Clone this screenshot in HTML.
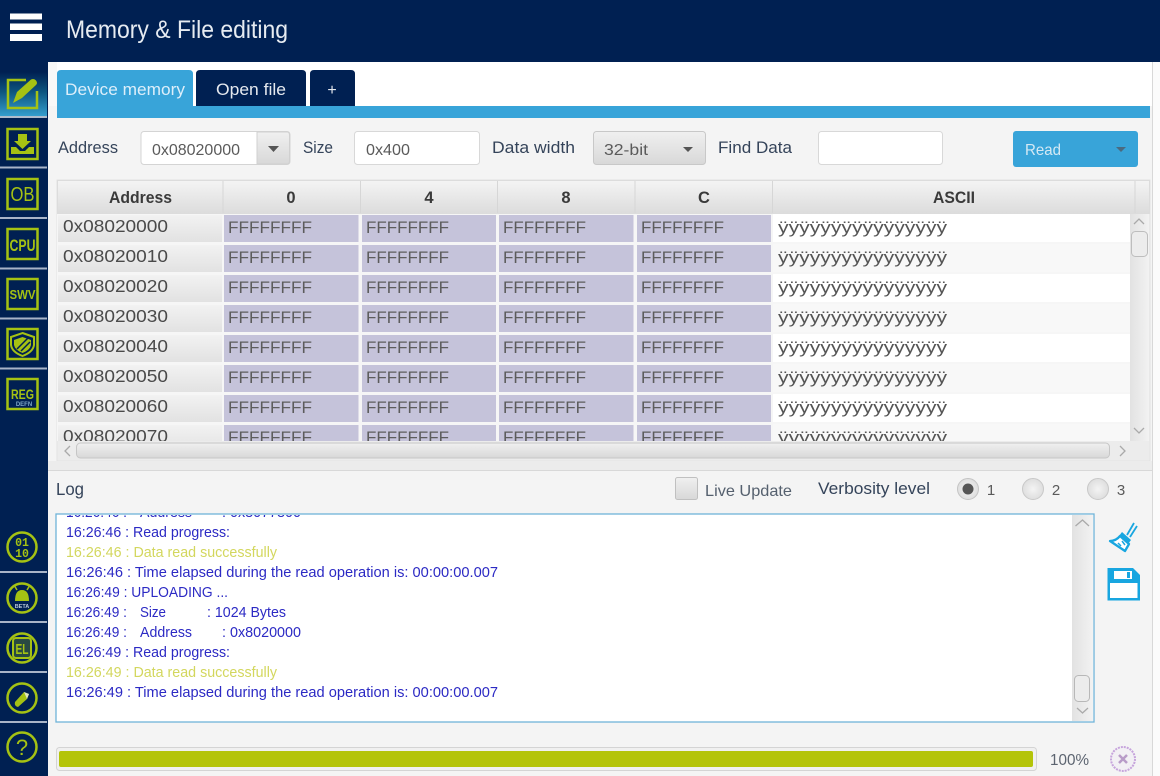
<!DOCTYPE html>
<html><head><meta charset="utf-8"><title>Memory &amp; File editing</title>
<style>
html,body{margin:0;padding:0;background:#f4f4f4;width:1160px;height:776px;overflow:hidden}
svg{display:block;filter:blur(.35px)}
text{font-family:"Liberation Sans",sans-serif;white-space:pre}
.t15{font-size:16.500px;fill:#35445a}
.v{font-size:15.500px;fill:#5a5a5a}
.h{font-size:16.500px;font-weight:bold;fill:#3a3a3a;text-anchor:middle}
.a{font-size:17.500px;fill:#4a4a4a}
.f{font-size:16.500px;fill:#5c5c5c}
.y{font-size:16.500px;fill:#555}
.l{font-size:15px;fill:#2c2ac4}
.g{font-size:15px;fill:#d3d75e}
.ic{fill:none;stroke:#a5c213;stroke-width:2.500}
.fl{fill:#a5c213}
.it{fill:#a5c213;font-weight:bold;text-anchor:middle}
</style></head><body>
<svg width="1160" height="776" viewBox="0 0 1160 776" xmlns="http://www.w3.org/2000/svg">
<defs>
<linearGradient id="hd" x1="0" y1="0" x2="0" y2="1"><stop offset="0" stop-color="#f4f4f4"/><stop offset="1" stop-color="#dcdcdc"/></linearGradient>
<linearGradient id="ad" x1="0" y1="0" x2="0" y2="1"><stop offset="0" stop-color="#f2f2f2"/><stop offset="1" stop-color="#e2e2e2"/></linearGradient>
<linearGradient id="act" x1="0" y1="0" x2="0" y2="1"><stop offset="0" stop-color="#002052"/><stop offset="0.45" stop-color="#0e5680"/><stop offset="1" stop-color="#36a0d0"/></linearGradient>
<linearGradient id="sb" x1="0" y1="0" x2="1" y2="0"><stop offset="0" stop-color="#e2e2e2"/><stop offset="1" stop-color="#f2f2f2"/></linearGradient>
<linearGradient id="sh" x1="0" y1="0" x2="0" y2="1"><stop offset="0" stop-color="#f0f0f0"/><stop offset="1" stop-color="#d8d8d8"/></linearGradient>
<radialGradient id="rd"><stop offset="0" stop-color="#f4f4f4"/><stop offset="1" stop-color="#dedede"/></radialGradient>
<clipPath id="tb"><rect x="57" y="214" width="1073" height="227"/></clipPath>
<clipPath id="lg"><rect x="57" y="515" width="1015" height="206"/></clipPath>
</defs>

<!-- base -->
<rect width="1160" height="776" fill="#f4f4f4"/>
<rect x="48" y="62" width="1112" height="44" fill="#fff"/>
<rect x="48" y="62" width="9" height="44" fill="#f8f8f8"/>
<rect x="1152" y="62" width="1" height="714" fill="#d8d8d8"/>
<rect x="1153" y="62" width="7" height="714" fill="#fbfbfb"/>

<!-- header + sidebar -->
<rect width="1160" height="62" fill="#002052"/>
<rect y="62" width="48" height="714" fill="#002052"/>
<rect x="10" y="13.500" width="32" height="6" fill="#fff"/>
<rect x="10" y="23.500" width="32" height="6.500" fill="#fff"/>
<rect x="10" y="34" width="32" height="7" fill="#fff"/>
<text x="66" y="38" font-size="25" fill="#e6ebf1" textLength="222" lengthAdjust="spacingAndGlyphs">Memory &amp; File editing</text>

<!-- side: active -->
<rect y="72" width="47" height="45" fill="url(#act)"/>
<rect y="116" width="47" height="2" fill="#b0bccc"/><rect y="166.500" width="47" height="2" fill="#a9b4c8"/><rect y="217" width="47" height="2" fill="#a9b4c8"/><rect y="267.500" width="47" height="2" fill="#a9b4c8"/><rect y="317.500" width="47" height="2" fill="#a9b4c8"/><rect y="367.500" width="47" height="2" fill="#a9b4c8"/><rect y="571" width="47" height="2" fill="#a9b4c8"/><rect y="621" width="47" height="2" fill="#a9b4c8"/><rect y="671" width="47" height="2" fill="#a9b4c8"/><rect y="721" width="47" height="2" fill="#a9b4c8"/>
<path class="ic" d="M26 80H8V108H37V91"/>
<path class="fl" d="M13 103L17 92L31 79.500Q34 78 36 80.500Q38 83 36 85L22 98Z"/>
<!-- download -->
<rect class="ic" x="7.500" y="129" width="30" height="30"/>
<path class="fl" d="M18 134H27V141H31L22.500 149L14 141H18Z"/>
<path class="fl" d="M11 147H16L20 151H25L29 147H34V154H11Z"/>
<!-- OB -->
<rect class="ic" x="7.500" y="179" width="30" height="30"/>
<text x="22.500" y="201" class="it" font-size="20" style="font-weight:normal" textLength="24" lengthAdjust="spacingAndGlyphs">OB</text>
<!-- CPU -->
<rect class="ic" x="7.500" y="229" width="30" height="30"/>
<text x="22.500" y="251" class="it" font-size="17" textLength="26" lengthAdjust="spacingAndGlyphs">CPU</text>
<!-- SWV -->
<rect class="ic" x="7.500" y="279" width="30" height="30"/>
<text x="22.500" y="299" class="it" font-size="13" textLength="26" lengthAdjust="spacingAndGlyphs">SWV</text>
<!-- shield -->
<rect class="ic" x="7.500" y="329" width="30" height="30"/>
<path d="M22.500 333L34 337V345Q33 352 22.500 356Q12 352 11 345V337Z" fill="none" stroke="#a5c213" stroke-width="2"/>
<path class="fl" d="M22.500 337L31 340V345Q30 350 22.500 353Q15 350 14 345V340Z"/>
<path d="M17 349L28 338M21 351L30 342" stroke="#002052" stroke-width="1.500"/>
<!-- REG -->
<rect class="ic" x="7.500" y="379" width="30" height="30"/>
<text x="22.500" y="399" class="it" font-size="13.500" textLength="23" lengthAdjust="spacingAndGlyphs">REG</text>
<text x="24" y="406" font-size="6" fill="#7fa8c8" font-weight="bold" text-anchor="middle">DEFN</text>
<!-- bottom circles -->
<circle class="ic" cx="22" cy="547" r="14.500"/>
<text x="22" y="546" class="it" font-size="11.500" style="font-family:'Liberation Mono',monospace">01</text>
<text x="22" y="557" class="it" font-size="11.500" style="font-family:'Liberation Mono',monospace">10</text>
<circle class="ic" cx="22" cy="598" r="14.500"/>
<path class="fl" d="M15 601Q15 590 22 590Q29 590 29 601Z"/>
<path d="M17 590L14 585M27 590L30 585" stroke="#a5c213" stroke-width="1.500"/>
<text x="22" y="608" font-size="5.500" fill="#b8c8d8" font-weight="bold" text-anchor="middle">BETA</text>
<circle class="ic" cx="22" cy="648" r="14.500"/>
<rect x="13" y="638" width="18" height="20" rx="3" fill="#a5c213" fill-opacity=".25" stroke="#a5c213" stroke-width="2"/>
<text x="22" y="654" class="it" font-size="14.500" textLength="13" lengthAdjust="spacingAndGlyphs">EL</text>
<circle class="ic" cx="22" cy="698" r="14.500"/>
<path class="fl" d="M15 702L24 692L29 694L27 699L18 707Q14 706 15 702Z"/>
<path d="M24 692L29 694L27 699Z" fill="#dfe6c0"/>
<circle class="ic" cx="22" cy="747" r="14.500"/>
<text x="22" y="755" class="it" font-size="22" style="font-weight:normal">?</text>

<!-- tabs -->
<path d="M57 106V74Q57 70 61 70H189Q193 70 193 74V106Z" fill="#38a4d9"/>
<path d="M196 106V74Q196 70 200 70H302Q306 70 306 74V106Z" fill="#002052"/>
<path d="M310 106V74Q310 70 314 70H351Q355 70 355 74V106Z" fill="#002052"/>
<rect x="57" y="106" width="1093" height="12" fill="#38a4d9"/>
<text x="65" y="95" font-size="17" fill="#dceefa" textLength="120" lengthAdjust="spacingAndGlyphs">Device memory</text>
<text x="216" y="95" font-size="17" fill="#e4e8ee" textLength="70" lengthAdjust="spacingAndGlyphs">Open file</text>
<text x="332" y="95" font-size="16" fill="#e4e8ee" text-anchor="middle">+</text>

<!-- toolbar -->
<text x="58" y="153" class="t15" textLength="60" lengthAdjust="spacingAndGlyphs">Address</text>
<rect x="141" y="131.500" width="149" height="33" rx="3" fill="#fff" stroke="#d4d4d4"/>
<path d="M257 132H287Q289.500 132 289.500 135V161Q289.500 164 287 164H257Z" fill="url(#sh)" stroke="#d0d0d0"/>
<path d="M268 146H279L273.500 152Z" fill="#555"/>
<text x="152" y="155" class="v" textLength="88" lengthAdjust="spacingAndGlyphs">0x08020000</text>
<text x="303" y="153" class="t15" textLength="30" lengthAdjust="spacingAndGlyphs">Size</text>
<rect x="354.500" y="131.500" width="125" height="33" rx="3" fill="#fff" stroke="#d8d8d8"/>
<text x="366" y="155" class="v" textLength="44" lengthAdjust="spacingAndGlyphs">0x400</text>
<text x="492" y="153" class="t15" textLength="83" lengthAdjust="spacingAndGlyphs">Data width</text>
<rect x="593.500" y="131.500" width="112" height="33" rx="3" fill="url(#sh)" stroke="#c8c8c8"/>
<text x="604" y="155" class="v" textLength="44" lengthAdjust="spacingAndGlyphs">32-bit</text>
<path d="M683 147H693L688 152Z" fill="#555"/>
<text x="718" y="153" class="t15" textLength="74" lengthAdjust="spacingAndGlyphs">Find Data</text>
<rect x="818.500" y="131.500" width="124" height="33" rx="3" fill="#fff" stroke="#d8d8d8"/>
<rect x="1013" y="131" width="125" height="36" rx="3" fill="#38a4d9"/>
<text x="1025" y="155" font-size="16" fill="#d4e9f4" textLength="36" lengthAdjust="spacingAndGlyphs">Read</text>
<path d="M1116 147H1126L1121 152Z" fill="#4a6a80"/>

<!-- table -->
<rect x="57" y="180" width="1093" height="281" fill="#efefef" stroke="#e2e2e2"/>
<rect x="57.500" y="180.500" width="1092" height="33" fill="url(#hd)" stroke="#dcdcdc"/>
<path d="M223 181V213M360.500 181V213M497.500 181V213M635 181V213M772.500 181V213M1135 181V213" stroke="#d6d6d6"/>
<text x="140.500" y="203" class="h" textLength="63" lengthAdjust="spacingAndGlyphs">Address</text>
<text x="291" y="203" class="h">0</text>
<text x="429" y="203" class="h">4</text>
<text x="566" y="203" class="h">8</text>
<text x="704" y="203" class="h">C</text>
<text x="954" y="203" class="h" textLength="42" lengthAdjust="spacingAndGlyphs">ASCII</text>

<g clip-path="url(#tb)">
<rect x="57" y="214" width="1073" height="227" fill="#f6f6f6"/>
<rect x="58" y="215" width="164" height="27" fill="url(#ad)"/>
<rect x="224" y="215" width="134.500" height="27" fill="#c5c3da"/><rect x="362" y="215" width="134" height="27" fill="#c5c3da"/><rect x="499" y="215" width="134.500" height="27" fill="#c5c3da"/><rect x="637" y="215" width="134" height="27" fill="#c5c3da"/>
<rect x="773" y="214" width="357" height="28" fill="#fff"/>
<rect x="58" y="245" width="164" height="27" fill="url(#ad)"/>
<rect x="224" y="245" width="134.500" height="27" fill="#c5c3da"/><rect x="362" y="245" width="134" height="27" fill="#c5c3da"/><rect x="499" y="245" width="134.500" height="27" fill="#c5c3da"/><rect x="637" y="245" width="134" height="27" fill="#c5c3da"/>
<rect x="773" y="244" width="357" height="28" fill="#f8f8f8"/>
<rect x="58" y="275" width="164" height="27" fill="url(#ad)"/>
<rect x="224" y="275" width="134.500" height="27" fill="#c5c3da"/><rect x="362" y="275" width="134" height="27" fill="#c5c3da"/><rect x="499" y="275" width="134.500" height="27" fill="#c5c3da"/><rect x="637" y="275" width="134" height="27" fill="#c5c3da"/>
<rect x="773" y="274" width="357" height="28" fill="#fff"/>
<rect x="58" y="305" width="164" height="27" fill="url(#ad)"/>
<rect x="224" y="305" width="134.500" height="27" fill="#c5c3da"/><rect x="362" y="305" width="134" height="27" fill="#c5c3da"/><rect x="499" y="305" width="134.500" height="27" fill="#c5c3da"/><rect x="637" y="305" width="134" height="27" fill="#c5c3da"/>
<rect x="773" y="304" width="357" height="28" fill="#f8f8f8"/>
<rect x="58" y="335" width="164" height="27" fill="url(#ad)"/>
<rect x="224" y="335" width="134.500" height="27" fill="#c5c3da"/><rect x="362" y="335" width="134" height="27" fill="#c5c3da"/><rect x="499" y="335" width="134.500" height="27" fill="#c5c3da"/><rect x="637" y="335" width="134" height="27" fill="#c5c3da"/>
<rect x="773" y="334" width="357" height="28" fill="#fff"/>
<rect x="58" y="365" width="164" height="27" fill="url(#ad)"/>
<rect x="224" y="365" width="134.500" height="27" fill="#c5c3da"/><rect x="362" y="365" width="134" height="27" fill="#c5c3da"/><rect x="499" y="365" width="134.500" height="27" fill="#c5c3da"/><rect x="637" y="365" width="134" height="27" fill="#c5c3da"/>
<rect x="773" y="364" width="357" height="28" fill="#f8f8f8"/>
<rect x="58" y="395" width="164" height="27" fill="url(#ad)"/>
<rect x="224" y="395" width="134.500" height="27" fill="#c5c3da"/><rect x="362" y="395" width="134" height="27" fill="#c5c3da"/><rect x="499" y="395" width="134.500" height="27" fill="#c5c3da"/><rect x="637" y="395" width="134" height="27" fill="#c5c3da"/>
<rect x="773" y="394" width="357" height="28" fill="#fff"/>
<rect x="58" y="425" width="164" height="27" fill="url(#ad)"/>
<rect x="224" y="425" width="134.500" height="27" fill="#c5c3da"/><rect x="362" y="425" width="134" height="27" fill="#c5c3da"/><rect x="499" y="425" width="134.500" height="27" fill="#c5c3da"/><rect x="637" y="425" width="134" height="27" fill="#c5c3da"/>
<rect x="773" y="424" width="357" height="28" fill="#f8f8f8"/>
<!-- row text -->
<text x="63" y="232" class="a" textLength="105" lengthAdjust="spacingAndGlyphs">0x08020000</text>
<text x="228" y="233" class="f" textLength="84" lengthAdjust="spacingAndGlyphs">FFFFFFFF</text><text x="366" y="233" class="f" textLength="83" lengthAdjust="spacingAndGlyphs">FFFFFFFF</text><text x="503" y="233" class="f" textLength="83" lengthAdjust="spacingAndGlyphs">FFFFFFFF</text><text x="641" y="233" class="f" textLength="83" lengthAdjust="spacingAndGlyphs">FFFFFFFF</text>
<text x="778" y="233" class="y" textLength="169" lengthAdjust="spacingAndGlyphs">ÿÿÿÿÿÿÿÿÿÿÿÿÿÿÿÿ</text>
<text x="63" y="262" class="a" textLength="105" lengthAdjust="spacingAndGlyphs">0x08020010</text>
<text x="228" y="263" class="f" textLength="84" lengthAdjust="spacingAndGlyphs">FFFFFFFF</text><text x="366" y="263" class="f" textLength="83" lengthAdjust="spacingAndGlyphs">FFFFFFFF</text><text x="503" y="263" class="f" textLength="83" lengthAdjust="spacingAndGlyphs">FFFFFFFF</text><text x="641" y="263" class="f" textLength="83" lengthAdjust="spacingAndGlyphs">FFFFFFFF</text>
<text x="778" y="263" class="y" textLength="169" lengthAdjust="spacingAndGlyphs">ÿÿÿÿÿÿÿÿÿÿÿÿÿÿÿÿ</text>
<text x="63" y="292" class="a" textLength="105" lengthAdjust="spacingAndGlyphs">0x08020020</text>
<text x="228" y="293" class="f" textLength="84" lengthAdjust="spacingAndGlyphs">FFFFFFFF</text><text x="366" y="293" class="f" textLength="83" lengthAdjust="spacingAndGlyphs">FFFFFFFF</text><text x="503" y="293" class="f" textLength="83" lengthAdjust="spacingAndGlyphs">FFFFFFFF</text><text x="641" y="293" class="f" textLength="83" lengthAdjust="spacingAndGlyphs">FFFFFFFF</text>
<text x="778" y="293" class="y" textLength="169" lengthAdjust="spacingAndGlyphs">ÿÿÿÿÿÿÿÿÿÿÿÿÿÿÿÿ</text>
<text x="63" y="322" class="a" textLength="105" lengthAdjust="spacingAndGlyphs">0x08020030</text>
<text x="228" y="323" class="f" textLength="84" lengthAdjust="spacingAndGlyphs">FFFFFFFF</text><text x="366" y="323" class="f" textLength="83" lengthAdjust="spacingAndGlyphs">FFFFFFFF</text><text x="503" y="323" class="f" textLength="83" lengthAdjust="spacingAndGlyphs">FFFFFFFF</text><text x="641" y="323" class="f" textLength="83" lengthAdjust="spacingAndGlyphs">FFFFFFFF</text>
<text x="778" y="323" class="y" textLength="169" lengthAdjust="spacingAndGlyphs">ÿÿÿÿÿÿÿÿÿÿÿÿÿÿÿÿ</text>
<text x="63" y="352" class="a" textLength="105" lengthAdjust="spacingAndGlyphs">0x08020040</text>
<text x="228" y="353" class="f" textLength="84" lengthAdjust="spacingAndGlyphs">FFFFFFFF</text><text x="366" y="353" class="f" textLength="83" lengthAdjust="spacingAndGlyphs">FFFFFFFF</text><text x="503" y="353" class="f" textLength="83" lengthAdjust="spacingAndGlyphs">FFFFFFFF</text><text x="641" y="353" class="f" textLength="83" lengthAdjust="spacingAndGlyphs">FFFFFFFF</text>
<text x="778" y="353" class="y" textLength="169" lengthAdjust="spacingAndGlyphs">ÿÿÿÿÿÿÿÿÿÿÿÿÿÿÿÿ</text>
<text x="63" y="382" class="a" textLength="105" lengthAdjust="spacingAndGlyphs">0x08020050</text>
<text x="228" y="383" class="f" textLength="84" lengthAdjust="spacingAndGlyphs">FFFFFFFF</text><text x="366" y="383" class="f" textLength="83" lengthAdjust="spacingAndGlyphs">FFFFFFFF</text><text x="503" y="383" class="f" textLength="83" lengthAdjust="spacingAndGlyphs">FFFFFFFF</text><text x="641" y="383" class="f" textLength="83" lengthAdjust="spacingAndGlyphs">FFFFFFFF</text>
<text x="778" y="383" class="y" textLength="169" lengthAdjust="spacingAndGlyphs">ÿÿÿÿÿÿÿÿÿÿÿÿÿÿÿÿ</text>
<text x="63" y="412" class="a" textLength="105" lengthAdjust="spacingAndGlyphs">0x08020060</text>
<text x="228" y="413" class="f" textLength="84" lengthAdjust="spacingAndGlyphs">FFFFFFFF</text><text x="366" y="413" class="f" textLength="83" lengthAdjust="spacingAndGlyphs">FFFFFFFF</text><text x="503" y="413" class="f" textLength="83" lengthAdjust="spacingAndGlyphs">FFFFFFFF</text><text x="641" y="413" class="f" textLength="83" lengthAdjust="spacingAndGlyphs">FFFFFFFF</text>
<text x="778" y="413" class="y" textLength="169" lengthAdjust="spacingAndGlyphs">ÿÿÿÿÿÿÿÿÿÿÿÿÿÿÿÿ</text>
<text x="63" y="442" class="a" textLength="105" lengthAdjust="spacingAndGlyphs">0x08020070</text>
<text x="228" y="443" class="f" textLength="84" lengthAdjust="spacingAndGlyphs">FFFFFFFF</text><text x="366" y="443" class="f" textLength="83" lengthAdjust="spacingAndGlyphs">FFFFFFFF</text><text x="503" y="443" class="f" textLength="83" lengthAdjust="spacingAndGlyphs">FFFFFFFF</text><text x="641" y="443" class="f" textLength="83" lengthAdjust="spacingAndGlyphs">FFFFFFFF</text>
<text x="778" y="443" class="y" textLength="169" lengthAdjust="spacingAndGlyphs">ÿÿÿÿÿÿÿÿÿÿÿÿÿÿÿÿ</text>
</g>
<!-- table scrollbars -->
<rect x="1130" y="214" width="19" height="227" fill="url(#sb)"/>
<path d="M1134 224L1139 219L1144 224M1134 428L1139 433L1144 428" fill="none" stroke="#aaa" stroke-width="1.300"/>
<rect x="1131.500" y="231.500" width="16" height="25" rx="4" fill="#ececec" stroke="#bdbdbd"/>
<rect x="58" y="441" width="1091" height="19" fill="#ececec"/>
<rect x="76.500" y="443" width="1033" height="15" rx="4" fill="url(#sh)" stroke="#c6c6c6"/>
<path d="M70 446L65 451L70 456M1120 446L1125 451L1120 456" fill="none" stroke="#aaa" stroke-width="1.300"/>
<!-- divider -->
<rect x="48" y="461" width="1104" height="9" fill="#ececec"/>
<rect x="48" y="470" width="1104" height="1" fill="#d8d8d8"/>

<!-- log header -->
<text x="56" y="495" font-size="17.500" fill="#35445a" textLength="28" lengthAdjust="spacingAndGlyphs">Log</text>
<rect x="675.500" y="477.500" width="22" height="22" rx="2" fill="url(#sh)" stroke="#c0c0c0"/>
<text x="705" y="496" font-size="16" fill="#55606e" textLength="87" lengthAdjust="spacingAndGlyphs">Live Update</text>
<text x="818" y="494" font-size="17" fill="#35445a" textLength="112" lengthAdjust="spacingAndGlyphs">Verbosity level</text>
<circle cx="968" cy="489" r="10.500" fill="url(#rd)" stroke="#c4c4c4"/><circle cx="968" cy="489" r="5.500" fill="#555"/>
<text x="991" y="495" font-size="15" fill="#5a5a5a" text-anchor="middle">1</text>
<circle cx="1033" cy="489" r="10.500" fill="url(#rd)" stroke="#c8c8c8"/>
<text x="1056" y="495" font-size="15" fill="#5a5a5a" text-anchor="middle">2</text>
<circle cx="1098" cy="489" r="10.500" fill="url(#rd)" stroke="#c8c8c8"/>
<text x="1121" y="495" font-size="15" fill="#5a5a5a" text-anchor="middle">3</text>

<!-- log -->
<rect x="56" y="514" width="1038" height="208" fill="#fff" stroke="#6fb4d8" stroke-width="1.300"/>
<g clip-path="url(#lg)">
<text x="66" y="517" class="l" textLength="61" lengthAdjust="spacingAndGlyphs">16:26:46 :</text><text x="140" y="517" class="l" textLength="52" lengthAdjust="spacingAndGlyphs">Address</text><text x="222" y="517" class="l" textLength="79" lengthAdjust="spacingAndGlyphs">: 0x8077800</text>
<text x="66" y="537" class="l" textLength="164" lengthAdjust="spacingAndGlyphs">16:26:46 : Read progress:</text>
<text x="66" y="557" class="g" textLength="211" lengthAdjust="spacingAndGlyphs">16:26:46 : Data read successfully</text>
<text x="66" y="577" class="l" textLength="432" lengthAdjust="spacingAndGlyphs">16:26:46 : Time elapsed during the read operation is: 00:00:00.007</text>
<text x="66" y="597" class="l" textLength="162" lengthAdjust="spacingAndGlyphs">16:26:49 : UPLOADING ...</text>
<text x="66" y="617" class="l" textLength="61" lengthAdjust="spacingAndGlyphs">16:26:49 :</text><text x="140" y="617" class="l" textLength="26" lengthAdjust="spacingAndGlyphs">Size</text><text x="207" y="617" class="l" textLength="79" lengthAdjust="spacingAndGlyphs">: 1024 Bytes</text>
<text x="66" y="637" class="l" textLength="61" lengthAdjust="spacingAndGlyphs">16:26:49 :</text><text x="140" y="637" class="l" textLength="52" lengthAdjust="spacingAndGlyphs">Address</text><text x="222" y="637" class="l" textLength="79" lengthAdjust="spacingAndGlyphs">: 0x8020000</text>
<text x="66" y="657" class="l" textLength="164" lengthAdjust="spacingAndGlyphs">16:26:49 : Read progress:</text>
<text x="66" y="677" class="g" textLength="211" lengthAdjust="spacingAndGlyphs">16:26:49 : Data read successfully</text>
<text x="66" y="697" class="l" textLength="432" lengthAdjust="spacingAndGlyphs">16:26:49 : Time elapsed during the read operation is: 00:00:00.007</text>
</g>
<rect x="1072" y="515" width="21" height="206" fill="url(#sb)"/>
<path d="M1075.500 526L1082.500 520L1089 526M1077 708L1082.500 713L1088 708" fill="none" stroke="#aaa" stroke-width="1.300"/>
<rect x="1074.500" y="675.500" width="15" height="26" rx="4" fill="#ececec" stroke="#b8b8b8"/>

<!-- brush -->
<path d="M1127 535L1134 523M1130 537L1137 526" fill="none" stroke="#18a6e0" stroke-width="1.800"/>
<path d="M1122 532L1131 540L1128 544L1119 536Z" fill="#18a6e0"/>
<path d="M1120 536L1129 544L1125 551L1110 541Q1116 541 1120 536Z" fill="#fff" stroke="#18a6e0" stroke-width="2.300" stroke-linejoin="round"/>
<path d="M1118 543L1121 546M1122 541L1125 545" stroke="#18a6e0" stroke-width="1.500"/>
<!-- floppy -->
<path d="M1107.500 568H1133L1140 575V600.500H1107.500Z" fill="#18a6e0"/>
<rect x="1110" y="583" width="27.500" height="15" fill="#fff"/>
<rect x="1114" y="571" width="18" height="8" fill="#fff"/>
<rect x="1127" y="572" width="3" height="6" fill="#18a6e0"/>

<!-- progress -->
<rect x="56.500" y="747.500" width="980" height="23" rx="3" fill="#f0f0f0" stroke="#d4d4d4"/>
<rect x="59" y="751" width="974" height="16" rx="2" fill="#b4c409"/>
<text x="1050" y="765" font-size="16" fill="#5c6470" textLength="39" lengthAdjust="spacingAndGlyphs">100%</text>
<circle cx="1123" cy="759" r="12" fill="#f2f0f4" stroke="#c6a4dc" stroke-width="2" stroke-dasharray="2 1"/>
<path d="M1119 755L1127 763M1127 755L1119 763" stroke="#b89cc8" stroke-width="2.500"/>
</svg>
</body></html>
